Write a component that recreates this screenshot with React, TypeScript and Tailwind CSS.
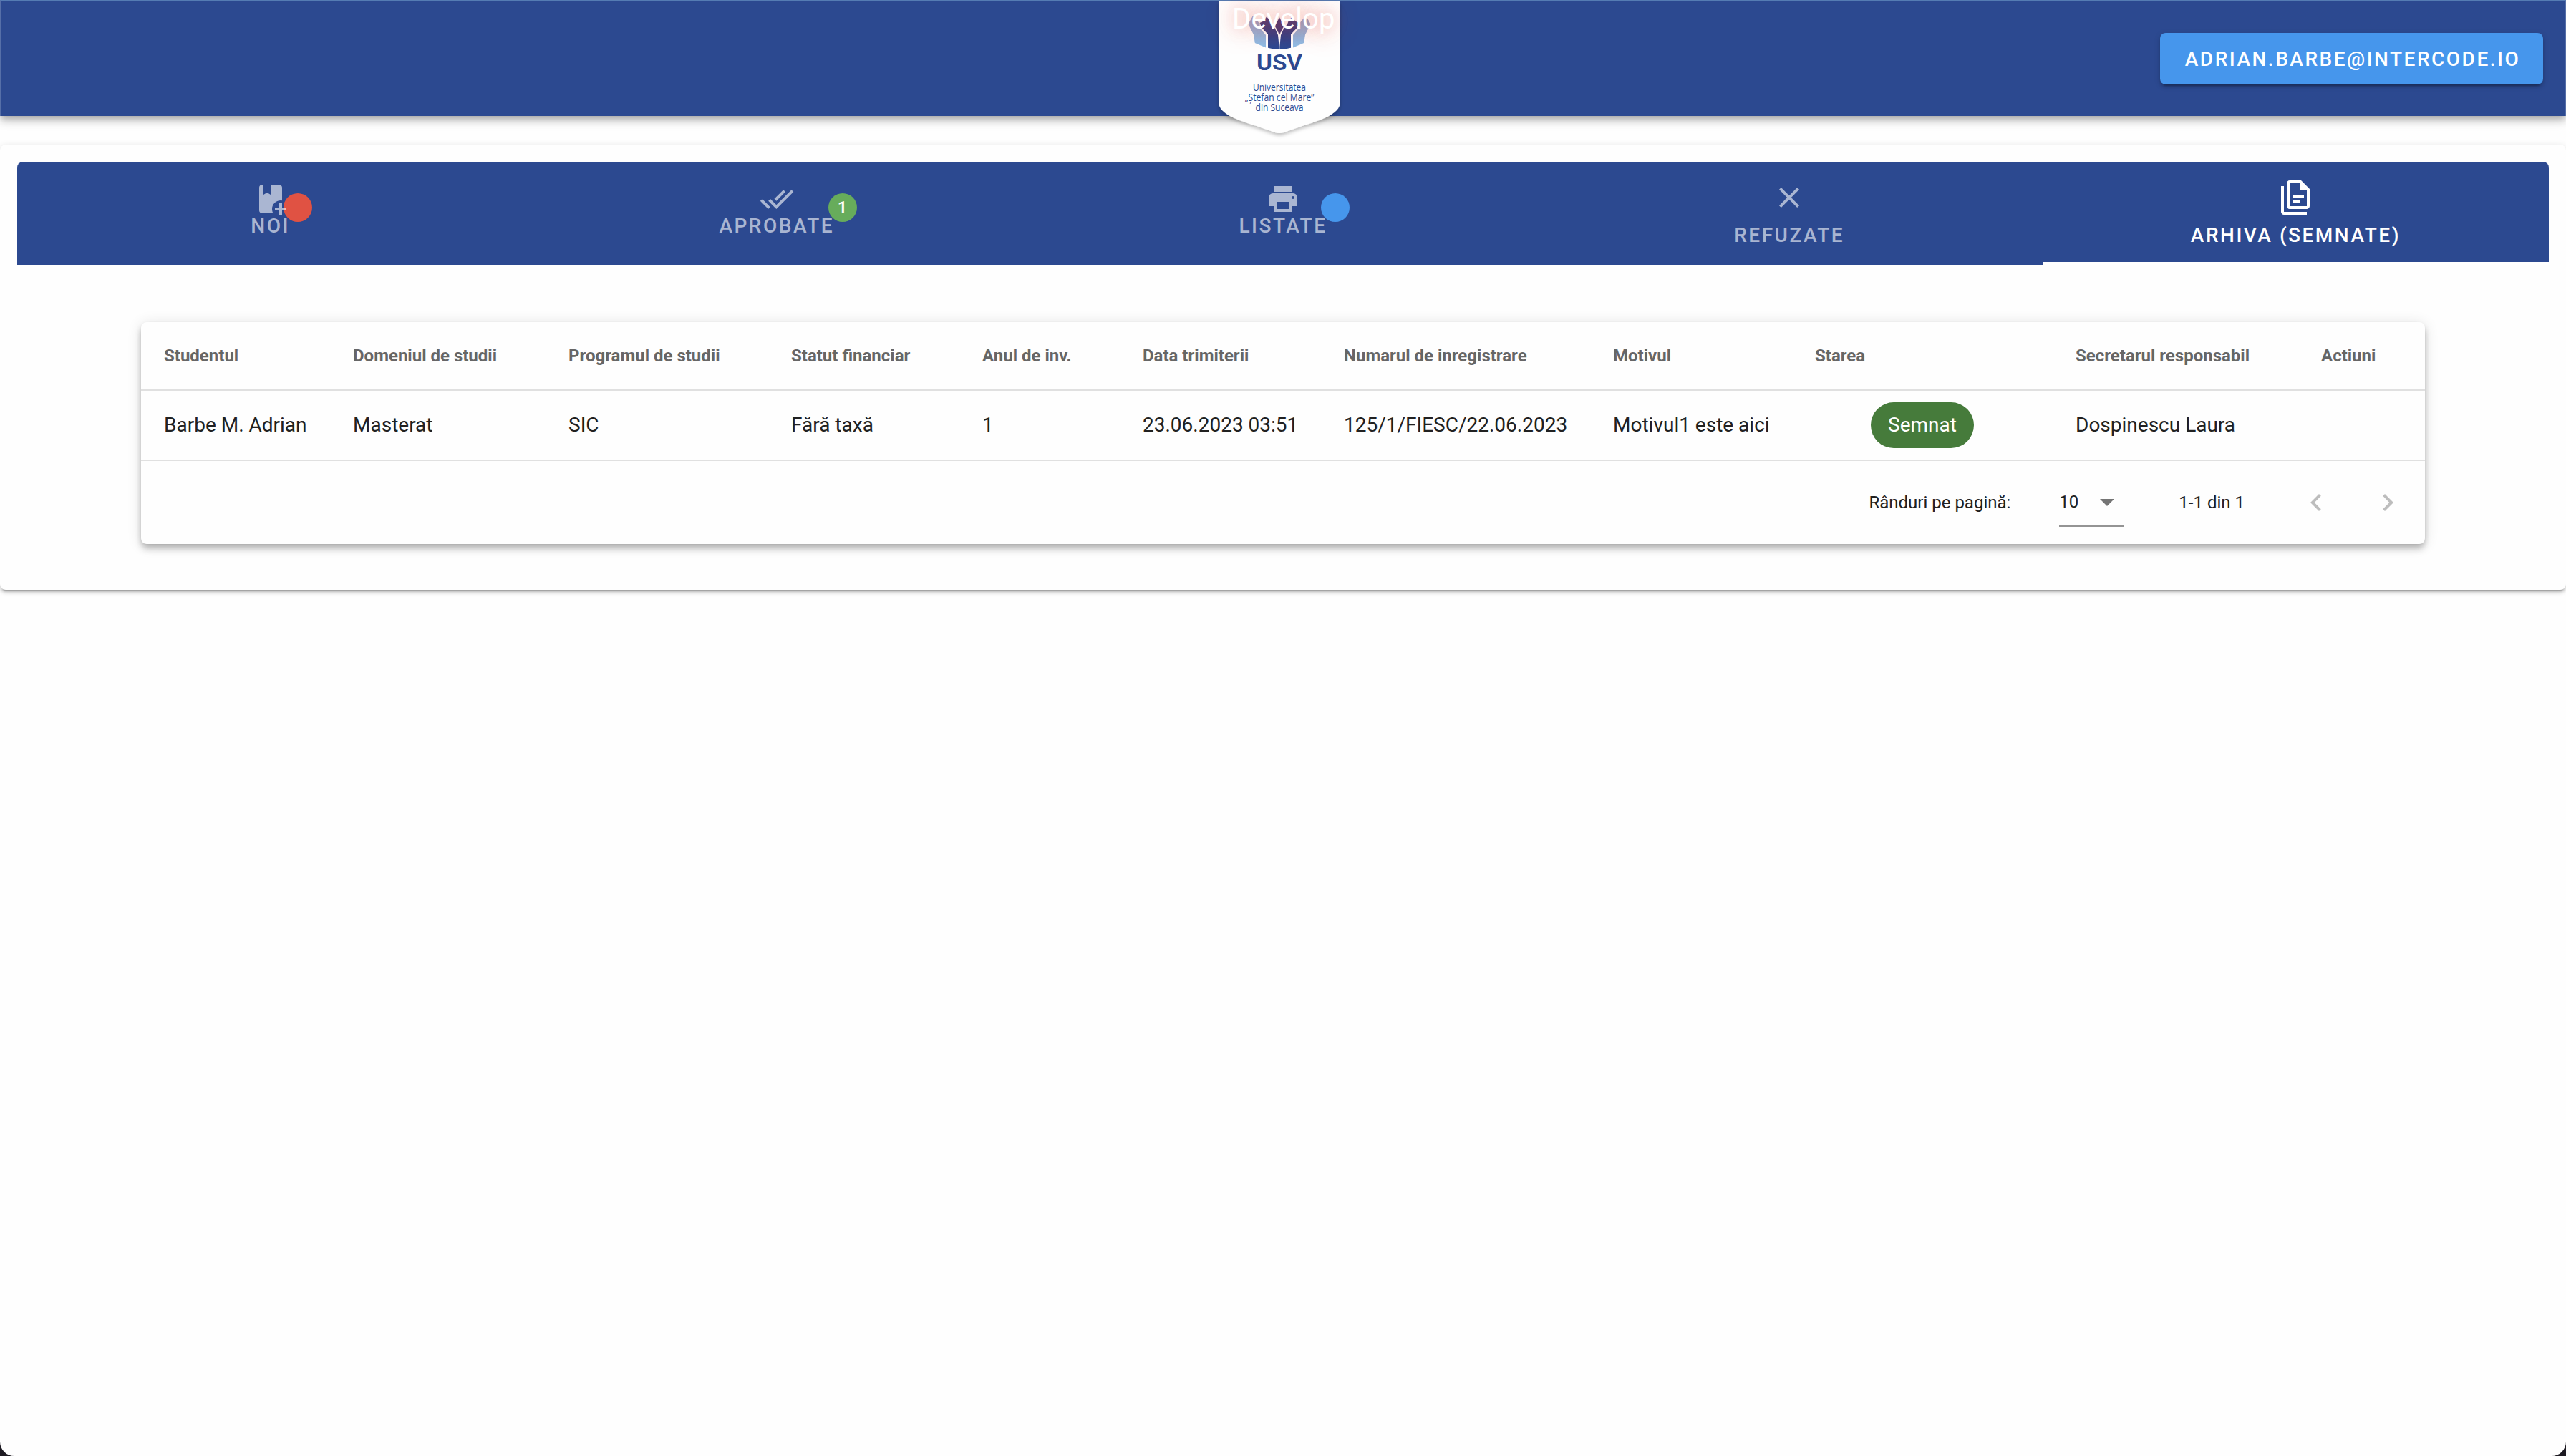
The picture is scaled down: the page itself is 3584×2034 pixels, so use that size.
import React from "react";

const icons = {
  bookPlus:
    "M13 19C13 20.1 13.3 21.12 13.81 22H6C4.89 22 4 21.11 4 20V4C4 2.9 4.89 2 6 2H7V9L9.5 7.5L12 9V2H18C19.1 2 20 2.89 20 4V13.09C19.67 13.04 19.34 13 19 13C15.69 13 13 15.69 13 19M20 18V15H18V18H15V20H18V23H20V20H23V18H20Z",
  checkAll:
    "M0.41,13.41L6,19L7.41,17.58L1.83,12M22.24,5.58L11.66,16.17L7.5,12L6.07,13.41L11.66,19L23.66,7M18,7L16.59,5.58L10.24,11.93L11.66,13.34L18,7Z",
  printer:
    "M18,3H6V7H18M19,12A1,1 0 0,1 18,11A1,1 0 0,1 19,10A1,1 0 0,1 20,11A1,1 0 0,1 19,12M16,19H8V14H16M19,8H5A3,3 0 0,0 2,11V17H6V21H18V17H22V11A3,3 0 0,0 19,8Z",
  close:
    "M19,6.41L17.59,5L12,10.59L6.41,5L5,6.41L10.59,12L5,17.59L6.41,19L12,13.41L17.59,19L19,17.59L13.41,12L19,6.41Z",
  documents:
    "M16 0H8C6.9 0 6 .9 6 2V18C6 19.1 6.9 20 8 20H20C21.1 20 22 19.1 22 18V6L16 0M20 18H8V2H15V7H20V18M4 4V22H20V24H4C2.9 24 2 23.1 2 22V4H4M10 10V12H18V10H10M10 14V16H15V14H10Z",
  menuDown: "M7,10L12,15L17,10H7Z",
  chevronLeft:
    "M15.41,16.58L10.83,12L15.41,7.41L14,6L8,12L14,18L15.41,16.58Z",
  chevronRight:
    "M8.59,16.58L13.17,12L8.59,7.41L10,6L16,12L10,18L8.59,16.58Z",
};

function Icon({ path, className = "" }: { path: string; className?: string }) {
  return (
    <svg viewBox="0 0 24 24" className={`size-12 shrink-0 fill-current ${className}`}>
      <path d={path} />
    </svg>
  );
}

const outerHand = "M1750 22L1743.5 33.5L1751 48.5L1752.8 60L1768 66.5V49L1759.5 39V33Z";
const innerHand =
  "M1759.5 32L1765 29.5L1769 23.5L1774 28.5L1776 34L1781 40L1785 49L1786.7 65V69Q1779 69 1771 66.8V48L1762.5 39Z";

function Logo() {
  return (
    <svg
      viewBox="1690 0 194 206"
      className="absolute left-[1690px] top-0 h-[206px] w-[194px] overflow-visible"
    >
      <defs>
        <linearGradient id="dark" x1="0" y1="24" x2="0" y2="69" gradientUnits="userSpaceOnUse">
          <stop offset="0" stopColor="#4b3f7c" />
          <stop offset="1" stopColor="#2b4a94" />
        </linearGradient>
        <linearGradient id="light" x1="0" y1="24" x2="0" y2="66" gradientUnits="userSpaceOnUse">
          <stop offset="0" stopColor="#9fa9cd" />
          <stop offset="1" stopColor="#8fbee6" />
        </linearGradient>
        <filter id="drop" x="-20%" y="-20%" width="140%" height="140%">
          <feDropShadow dx="0" dy="3" stdDeviation="2.5" floodColor="#000" floodOpacity="0.25" />
        </filter>
      </defs>
      <path
        d="M1702 2H1872V143C1871 160 1844 168 1819 176L1793 185Q1787 187 1781 185L1755 176C1730 168 1703 160 1702 143Z"
        fill="#fefefe"
        filter="url(#drop)"
      />
      <path d={outerHand} fill="url(#light)" />
      <path d={innerHand} fill="url(#dark)" />
      <g transform="translate(3574 0) scale(-1 1)">
        <path d={outerHand} fill="url(#light)" />
        <path d={innerHand} fill="url(#dark)" />
      </g>
      <path
        d="M1787 23.5L1793.5 36.5L1787 49L1780.5 36.5Z"
        fill="#4b3f7c"
        stroke="#fefefe"
        strokeWidth="0.6"
      />
      <g fill="#2c4990" textAnchor="middle">
        <text
          x="1787"
          y="97.5"
          fontFamily="Roboto"
          fontWeight="600"
          fontSize="32"
          textLength="64"
          lengthAdjust="spacingAndGlyphs"
        >
          USV
        </text>
        <g fontFamily="Open Sans, Noto Sans" fontSize="14">
          <text x="1787" y="126.5" textLength="74" lengthAdjust="spacingAndGlyphs">
            Universitatea
          </text>
          <text x="1787" y="141" textLength="97" lengthAdjust="spacingAndGlyphs">
            „Ștefan cel Mare”
          </text>
          <text x="1787" y="155.3" textLength="67" lengthAdjust="spacingAndGlyphs">
            din Suceava
          </text>
        </g>
      </g>
    </svg>
  );
}

type Tab = { label: string; icon: string; badge?: string; count?: string };

const tabs: Tab[] = [
  { label: "Noi", icon: icons.bookPlus, badge: "bg-[#e05243]" },
  { label: "Aprobate", icon: icons.checkAll, badge: "bg-[#67ac5b]", count: "1" },
  { label: "Listate", icon: icons.printer, badge: "bg-[#4696ec]" },
  { label: "Refuzate", icon: icons.close },
  { label: "Arhiva (semnate)", icon: icons.documents },
];

const columns = [
  { title: "Studentul", value: "Barbe M. Adrian", width: "w-[264px]" },
  { title: "Domeniul de studii", value: "Masterat", width: "w-[301px]" },
  { title: "Programul de studii", value: "SIC", width: "w-[311px]" },
  { title: "Statut financiar", value: "Fără taxă", width: "w-[267px]" },
  { title: "Anul de inv.", value: "1", width: "w-[224px]" },
  { title: "Data trimiterii", value: "23.06.2023 03:51", width: "w-[281px]" },
  { title: "Numarul de inregistrare", value: "125/1/FIESC/22.06.2023", width: "w-[376px]" },
  { title: "Motivul", value: "Motivul1 este aici", width: "w-[282px]" },
  { title: "Starea", value: "Semnat", width: "w-[364px]", chip: true },
  { title: "Secretarul responsabil", value: "Dospinescu Laura", width: "w-[343px]" },
  { title: "Actiuni", value: "", width: "w-[177px]" },
];

export default function App() {
  return (
    <div className="h-[2034px] w-[3584px] overflow-hidden bg-[#1d1a22] font-['Roboto',sans-serif]">
      <div className="flex h-full flex-col rounded-b-[20px] bg-[#fefefe]">
        <header className="relative z-0 flex h-[162px] shrink-0 items-center justify-end border-x-2 border-t-2 border-x-[#566fa8] border-t-[#557cb3] bg-[#2c4990] pr-[30px] shadow-[0_4px_8px_-2px_rgba(0,0,0,0.2),0_8px_10px_0_rgba(0,0,0,0.14),0_2px_20px_0_rgba(0,0,0,0.12)]">
          <button className="flex h-[72px] w-[535px] items-center justify-center whitespace-nowrap rounded-lg bg-[#4696ec] pl-[3px] pt-0.5 text-[28px] font-medium uppercase tracking-[2.5px] text-white shadow-[0_6px_2px_-4px_rgba(0,0,0,0.2),0_4px_4px_0_rgba(0,0,0,0.14),0_2px_10px_0_rgba(0,0,0,0.12)]">
            adrian.barbe@intercode.io
          </button>
        </header>

        <main className="relative mt-10 h-[622px] shrink-0 rounded-lg bg-[#fefefe] px-6 pt-6 shadow-[0_6px_2px_-4px_rgba(0,0,0,0.2),0_4px_4px_0_rgba(0,0,0,0.14),0_2px_10px_0_rgba(0,0,0,0.12)]">
          <nav className="grid h-36 grid-cols-5 overflow-hidden rounded-t-lg bg-[#2c4990] text-[28px] font-medium uppercase leading-8 tracking-[2.5px]">
            {tabs.map((tab, i) => (
              <div
                key={tab.label}
                className={
                  i === 4
                    ? "flex flex-col items-center border-b-4 border-white pt-[26px] text-white"
                    : tab.badge
                      ? "flex flex-col items-center pt-7 text-white"
                      : "flex flex-col items-center pt-[26px] text-white/60"
                }
              >
                {tab.badge ? (
                  <div className="relative flex flex-col items-center">
                    <span
                      className={`absolute left-[calc(100%-8.5px)] top-4 flex size-10 items-center justify-center rounded-full text-2xl tracking-normal ${tab.badge}`}
                    >
                      {tab.count}
                    </span>
                    <Icon path={tab.icon} className="relative opacity-60" />
                    <span className="-mt-0.5 text-white/60">{tab.label}</span>
                  </div>
                ) : (
                  <>
                    <Icon path={tab.icon} />
                    <span className="mt-[13px]">{tab.label}</span>
                  </>
                )}
              </div>
            ))}
          </nav>

          <section className="ml-[173px] mt-20 h-[310px] w-[3190px] rounded-lg bg-[#fefefe] shadow-[0_4px_8px_-2px_rgba(0,0,0,0.2),0_8px_10px_0_rgba(0,0,0,0.14),0_2px_20px_0_rgba(0,0,0,0.12)]">
            <table className="w-full table-fixed border-separate border-spacing-0 whitespace-nowrap text-left">
              <thead>
                <tr>
                  {columns.map((c) => (
                    <th
                      key={c.title}
                      className={`h-24 border-b-2 border-[#e0e0e0] px-8 text-2xl font-bold text-[#666] ${c.width}`}
                    >
                      {c.title}
                    </th>
                  ))}
                </tr>
              </thead>
              <tbody>
                <tr>
                  {columns.map((c) => (
                    <td
                      key={c.title}
                      className="h-[98px] border-b-2 border-[#e0e0e0] px-8 py-0 text-[28px] text-[#212121]"
                    >
                      {c.chip ? (
                        <span className="mx-auto flex h-16 w-36 items-center justify-center rounded-full bg-[#467b3b] text-white">
                          {c.value}
                        </span>
                      ) : (
                        c.value
                      )}
                    </td>
                  ))}
                </tr>
              </tbody>
            </table>
            <footer className="flex h-[116px] items-center justify-end whitespace-nowrap pr-7 text-2xl text-[#212121]">
              <span>Rânduri pe pagină:</span>
              <div className="ml-[68px] flex h-[68px] w-[91px] items-center justify-between border-b-2 border-[#949494]">
                <span>10</span>
                <Icon path={icons.menuDown} className="text-[#757575]" />
              </div>
              <span className="ml-[76px]">1-1 din 1</span>
              <Icon path={icons.chevronLeft} className="ml-[76px] text-[#bdbdbd]" />
              <Icon path={icons.chevronRight} className="ml-[52px] text-[#bdbdbd]" />
            </footer>
          </section>
        </main>
      </div>

      <Logo />
      <div className="absolute left-[1721px] top-0 text-[40px] leading-[54px] tracking-[0.15px] text-white [text-shadow:0_0_20px_rgba(230,70,50,0.35),0_0_40px_rgba(230,60,40,0.45)]">
        Develop
      </div>
    </div>
  );
}
